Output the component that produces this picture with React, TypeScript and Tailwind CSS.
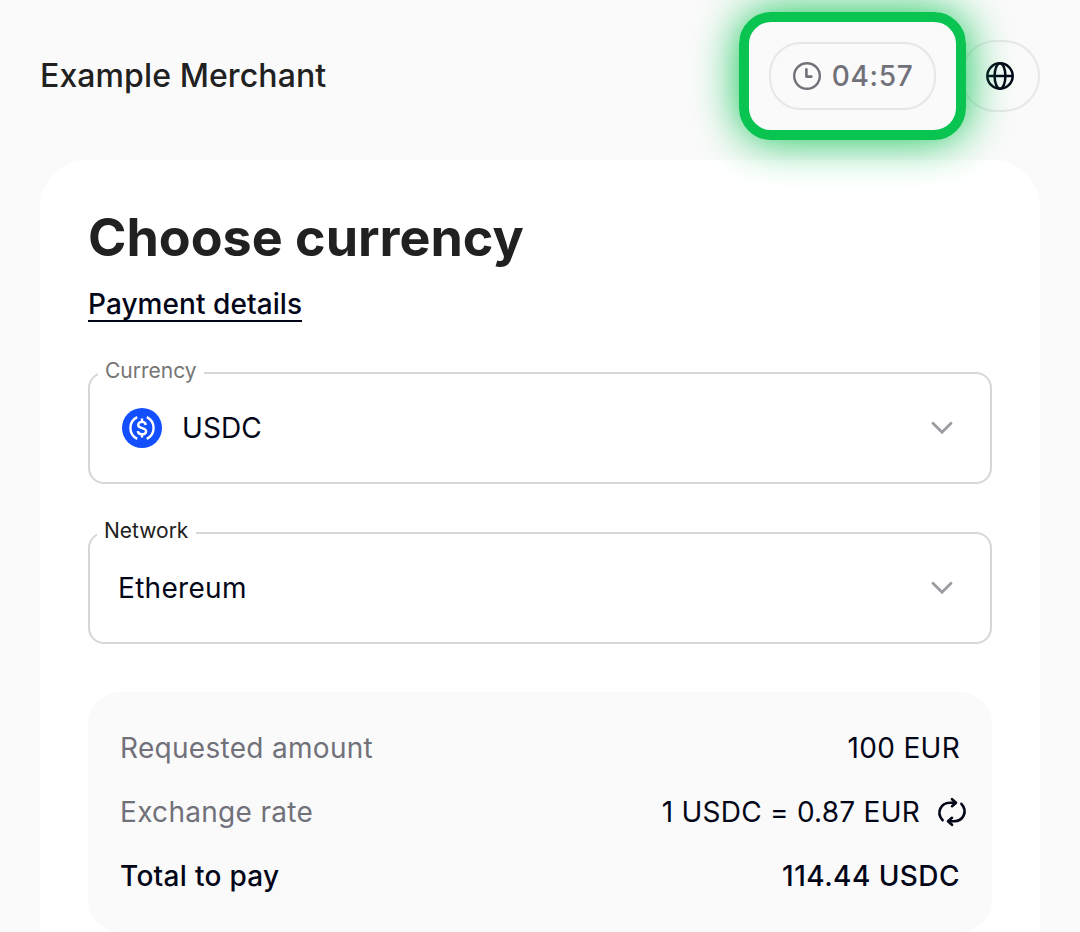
import React from "react";

interface SelectFieldProps {
  label: string;
  labelClass: string;
  valueClass: string;
  value: string;
  icon?: React.ReactNode;
}

const ClockIcon = () => (
  <svg width="28" height="28" viewBox="0 0 28 28" fill="none" stroke="currentColor">
    <circle cx="14" cy="14" r="12.8" strokeWidth="2.4" />
    <path d="M13.4 7.4v7.2h5" strokeWidth="2.6" strokeLinecap="round" strokeLinejoin="round" />
  </svg>
);

const GlobeIcon = () => (
  <svg width="28" height="28" viewBox="0 0 28 28" fill="none" stroke="#020617" strokeWidth="2.5">
    <circle cx="14" cy="14" r="12.7" />
    <ellipse cx="14" cy="14" rx="5.4" ry="12.7" />
    <path d="M1.2 14h25.6" />
  </svg>
);

const UsdcIcon = () => (
  <svg width="40" height="40" viewBox="0 0 40 40" fill="none">
    <circle cx="20" cy="20" r="20" fill="#144fff" />
    <g stroke="#fff" strokeWidth="2.4">
      <path d="M15.2 9.2A12 12 0 0 0 15.2 30.8" />
      <path d="M24.8 9.2A12 12 0 0 1 24.8 30.8" />
      <path d="M23.8 17c-.3-2-1.7-3.1-3.8-3.1-2.2 0-3.8 1.1-3.8 3 0 4.3 7.9 2.1 7.9 6.4 0 2-1.6 3-4.1 3s-4-1.200-4.200-3.200" />
      <path d="M20 10.4v3.5M20 26.3v3.3" />
    </g>
  </svg>
);

const ChevronIcon = () => (
  <svg width="24" height="16" viewBox="0 0 24 16" fill="none">
    <path d="M3 3.2l9 9 9-9" stroke="#9b9ba3" strokeWidth="2.8" strokeLinecap="round" />
  </svg>
);

const RefreshIcon = () => (
  <svg
    width="32"
    height="32"
    viewBox="0 0 32 32"
    fill="none"
    stroke="#020617"
    strokeWidth="2.6"
    strokeLinecap="round"
    strokeLinejoin="round"
  >
    <path d="M6.6 24.2C-.2 16.6 4.8 6.7 14 6.7h5.2" />
    <path d="M16 3.2l4 3.5-4 3.5" />
    <path d="M25.4 7.8C32.2 15.4 27.2 25.3 18 25.3h-5.2" />
    <path d="M16 21.8l-4 3.5 4 3.5" />
  </svg>
);

const SelectField = ({ label, labelClass, valueClass, value, icon }: SelectFieldProps) => (
  <div className="relative flex h-28 items-center justify-between rounded-2xl border-2 border-[#d6d6d6] pr-9">
    <span className={`absolute -top-[17px] bg-white text-[21px] leading-7 ${labelClass}`}>
      {label}
    </span>
    <div className={`flex items-center gap-5 ${valueClass}`}>
      {icon}
      <span className="text-[28px] leading-10 text-slate-950">{value}</span>
    </div>
    <ChevronIcon />
  </div>
);

export default function App() {
  return (
    <div className="h-[932px] w-[1080px] overflow-hidden bg-[#fafafa] px-10 font-['Inter',sans-serif]">
      {/* Header */}
      <header className="flex h-40 items-center justify-between pb-2">
        <h2 className="text-[32px] leading-10 font-medium tracking-[0.1px] text-[#212121]">Example Merchant</h2>
        <div className="flex items-center gap-6">
          <div className="relative flex h-[68px] w-[167px] items-center justify-center gap-[11px] rounded-[32px] border-2 border-[#e7e7e7] pl-px text-[#71717a]">
            <ClockIcon />
            <span className="text-[28px] leading-10 font-medium tracking-[0.7px]">04:57</span>
            <div className="pointer-events-none absolute -top-8 -left-8 z-10 h-32 w-[227px] rounded-[32px] border-[10px] border-[#0ac452] shadow-[0_0_45px_#0ac452]" />
          </div>
          <div className="flex h-[72px] w-20 items-center justify-center rounded-[36px] border-2 border-[#e7e7e7]">
            <GlobeIcon />
          </div>
        </div>
      </header>

      {/* Checkout card */}
      <main className="h-[820px] rounded-t-[48px] bg-white px-12 pt-12">
        <h1 className="text-[52px] leading-[60px] font-bold text-[#212121]">Choose currency</h1>
        <div className="mt-5 flex">
          <a className="border-b-2 border-slate-950 text-[28px] leading-8 font-medium tracking-[0.07px] text-slate-950">
            Payment details
          </a>
        </div>

        <div className="mt-[50px] flex flex-col gap-12">
          <SelectField
            label="Currency"
            labelClass="left-2 w-[106px] pl-[7px] text-[#757575]"
            valueClass="pl-8 tracking-[0.1px]"
            value="USDC"
            icon={<UsdcIcon />}
          />
          <SelectField
            label="Network"
            labelClass="left-[7px] w-[99px] pl-[7px] text-[#212121]"
            valueClass="pl-7 tracking-[0.3px]"
            value="Ethereum"
          />
        </div>

        {/* Summary */}
        <div className="mt-12 rounded-[32px] bg-[#fafafa] px-8 py-6 text-[28px] tracking-[0.3px] text-slate-950">
          <div className="flex h-16 items-center justify-between">
            <span className="text-[#71717a]">Requested amount</span>
            <span>100 EUR</span>
          </div>
          <div className="flex h-16 items-center justify-between">
            <span className="text-[#71717a]">Exchange rate</span>
            <span className="-mr-2 flex items-center gap-4 tracking-[0.25px]">
              1 USDC = 0.87 EUR
              <RefreshIcon />
            </span>
          </div>
          <div className="flex h-16 items-center justify-between font-medium">
            <span>Total to pay</span>
            <span className="tracking-[0.45px]">114.44 USDC</span>
          </div>
        </div>
      </main>
    </div>
  );
}
